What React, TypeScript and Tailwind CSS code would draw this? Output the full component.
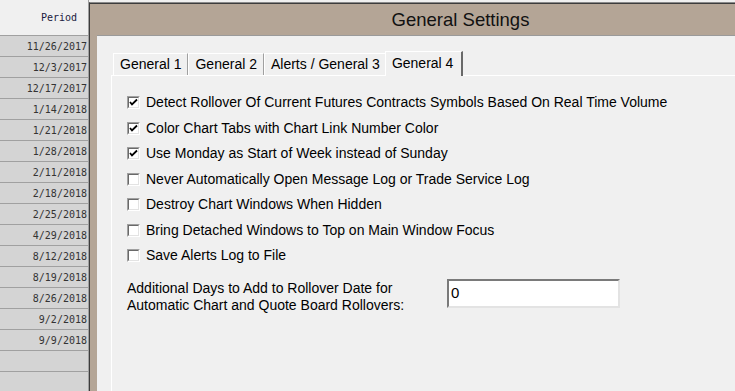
import React from "react"

const dates = [
  "11/26/2017",
  "12/3/2017",
  "12/17/2017",
  "1/14/2018",
  "1/21/2018",
  "1/28/2018",
  "2/11/2018",
  "2/18/2018",
  "2/25/2018",
  "4/29/2018",
  "8/12/2018",
  "8/19/2018",
  "8/26/2018",
  "9/2/2018",
  "9/9/2018",
  "",
  "",
]

const options = [
  { label: "Detect Rollover Of Current Futures Contracts Symbols Based On Real Time Volume", checked: true },
  { label: "Color Chart Tabs with Chart Link Number Color", checked: true },
  { label: "Use Monday as Start of Week instead of Sunday", checked: true },
  { label: "Never Automatically Open Message Log or Trade Service Log", checked: false },
  { label: "Destroy Chart Windows When Hidden", checked: false },
  { label: "Bring Detached Windows to Top on Main Window Focus", checked: false },
  { label: "Save Alerts Log to File", checked: false },
]

const tabs = ["General 1", "General 2", "Alerts / General 3"]

function CheckBox({ checked }: { checked: boolean }) {
  return (
    <span className="flex h-[13px] w-[13px] shrink-0 border-t border-l border-t-[#a0a0a0] border-l-[#a0a0a0] border-r border-b border-r-white border-b-white">
      <span className="flex flex-1 items-center justify-center bg-white border-t border-l border-t-[#696969] border-l-[#696969] border-r border-b border-r-[#e3e3e3] border-b-[#e3e3e3]">
        {checked && (
          <svg width="9" height="9" viewBox="0 0 9 9">
            <path d="M1 4 L3 6.5 L8 1.5" stroke="#000" strokeWidth="1.8" fill="none" />
          </svg>
        )}
      </span>
    </span>
  )
}

function DateGrid() {
  return (
    <div className="w-[89px] shrink-0 border-r border-r-[#a0a0a0] bg-[#f0f0f0] font-['DejaVu_Sans_Mono',monospace] text-[10px]">
      <div className="flex h-[36px] items-center justify-end border-b border-b-[#a0a0a0] pr-[11px] text-[#1a1a40]">
        Period
      </div>
      {dates.map((d, i) => (
        <div
          key={i}
          className="flex h-[21px] items-center justify-end border-b border-b-[#a0a0a0] bg-[#d4d4d4] pr-[1px] text-[#333]"
        >
          {d}
        </div>
      ))}
    </div>
  )
}

export default function App() {
  return (
    <div className="flex h-[391px] w-[735px] overflow-hidden bg-[#f0f0f0] font-['Liberation_Sans',Arial,sans-serif] text-[14px] text-black">
      <DateGrid />
      <div className="mt-[2px] flex w-[742px] shrink-0 flex-col border-t border-l border-t-[#8a8a8a] border-l-[#3c3c3c] bg-[#b4a596]">
        <div className="flex h-[32px] items-center justify-center border-t border-t-[#3c3c3c] pt-[1px] text-[18.5px] text-[#111]">
          General Settings
        </div>
        <div className="ml-[7px] flex flex-1 flex-col border-t border-t-[#9a9a9a] bg-[#f0f0f0] pl-[14px]">
          <div className="flex h-[39px] items-end pl-[2px]">
            {tabs.map((t) => (
              <div
                key={t}
                className="flex h-[22px] items-center border-t border-l border-r border-t-white border-l-white border-r-[#a0a0a0] px-[6px] pb-[1px]"
              >
                {t}
              </div>
            ))}
            <div className="relative -ml-[2px] -mr-[2px] mb-[-1px] flex h-[25px] items-center border-t border-l border-r-2 border-t-white border-l-white border-r-[#696969] bg-[#f0f0f0] px-[6px] pb-[2px] pr-[8px]">
              General 4
            </div>
          </div>
          <div className="flex flex-1 flex-col border-t border-l border-t-white border-l-white pl-[15px] pt-[14px]">
            {options.map((o) => (
              <div key={o.label} className="flex h-[25.5px] items-center gap-[6px] whitespace-nowrap">
                <CheckBox checked={o.checked} />
                <span>{o.label}</span>
              </div>
            ))}
            <div className="mt-[10px] flex items-start">
              <div className="w-[320px] pt-[1px] leading-[17px]">
                Additional Days to Add to Rollover Date for
                <br />
                Automatic Chart and Quote Board Rollovers:
              </div>
              <div className="flex h-[29px] w-[173px] border-t-2 border-l-2 border-t-[#7a7a7a] border-l-[#7a7a7a] border-r-2 border-b-2 border-r-[#e3e3e3] border-b-[#e3e3e3] bg-white px-[2px] pt-[1px] text-[15px]">
                0
              </div>
            </div>
          </div>
        </div>
      </div>
    </div>
  )
}
